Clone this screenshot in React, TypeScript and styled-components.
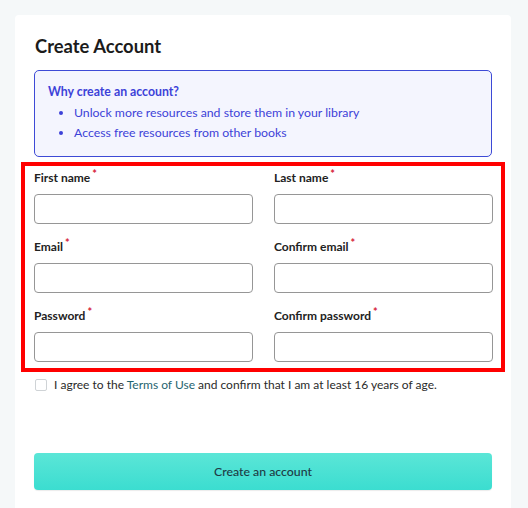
import * as React from "react"
import styled, { createGlobalStyle } from "styled-components"

const GlobalStyle = createGlobalStyle`
  html, body {
    margin: 0;
    padding: 0;
    background: #f5f8f9;
    font-family: "Lato", "Liberation Sans", sans-serif;
    color: #222;
  }
  * { box-sizing: border-box; }
`

const Page = styled.div`
  padding: 15px 17px 0 15px;
  height: 508px;
  overflow: hidden;
`

const Card = styled.div`
  background: #fff;
  border-radius: 4px;
  padding: 19px 19px 40px;
  min-height: 520px;
`

const Title = styled.h1`
  margin: 0 0 12px 1px;
  font-size: 18.4px;
  line-height: 24px;
  font-weight: 700;
  color: #1b1b1b;
`

const InfoBox = styled.div`
  border: 1px solid #3d4ad6;
  border-radius: 5px;
  background: #f4f5fe;
  color: #3d42d8;
  padding: 12px 13px 13px;
  font-size: 12.3px;
`

const InfoTitle = styled.div`
  font-weight: 700;
  line-height: 18px;
  margin-bottom: 2px;
`

const InfoList = styled.ul`
  margin: 0;
  padding: 0 0 0 26px;
  li {
    line-height: 20px;
  }
`

const Fields = styled.div`
  margin: 5px -13px 0;
  border: 4px solid #ff0000;
  padding: 3px 9px 6px;
  display: grid;
  grid-template-columns: 1fr 1fr;
  column-gap: 21px;
  row-gap: 14px;
`

const Field = styled.label`
  display: flex;
  flex-direction: column;
`

const Label = styled.span`
  font-size: 12px;
  font-weight: 700;
  line-height: 18px;
  color: #222;
  margin-bottom: 7px;
  sup {
    color: #d6213a;
    font-size: 11px;
    margin-left: 2px;
    vertical-align: 4px;
    line-height: 0;
  }
`

const Input = styled.input`
  height: 30px;
  border: 1px solid #969696;
  border-radius: 4px;
  background: #fff;
  padding: 0 8px;
  font: inherit;
`

const Agree = styled.label`
  display: flex;
  align-items: center;
  gap: 7px;
  margin-top: 4px;
  font-size: 12px;
  line-height: 18px;
  color: #2a2a2a;
  a {
    color: #1f6470;
    text-decoration: none;
  }
`

const Box = styled.span`
  width: 12px;
  height: 12px;
  flex: none;
  border: 1px solid #cfd3d6;
  border-radius: 2px;
  background: #fff;
  margin-left: 1px;
`

const Submit = styled.button`
  display: block;
  width: 100%;
  height: 37px;
  margin-top: 59px;
  border: none;
  border-radius: 4px;
  background: linear-gradient(#5be6d7, #3bddd0);
  color: #1e3a44;
  font-family: inherit;
  font-size: 12.3px;
  font-weight: 500;
  box-shadow: 0 1px 1px rgba(0, 0, 0, 0.08);
`

const fields = [
  "First name",
  "Last name",
  "Email",
  "Confirm email",
  "Password",
  "Confirm password",
]

export default function App() {
  return (
    <Page>
      <GlobalStyle />
      <Card>
        <Title>Create Account</Title>
        <InfoBox>
          <InfoTitle>Why create an account?</InfoTitle>
          <InfoList>
            <li>Unlock more resources and store them in your library</li>
            <li>Access free resources from other books</li>
          </InfoList>
        </InfoBox>
        <Fields>
          {fields.map((f) => (
            <Field key={f}>
              <Label>
                {f}
                <sup>*</sup>
              </Label>
              <Input type={f.toLowerCase().includes("password") ? "password" : "text"} />
            </Field>
          ))}
        </Fields>
        <Agree>
          <Box />
          <span>
            I agree to the <a href="#">Terms of Use</a> and confirm that I am at least 16 years of age.
          </span>
        </Agree>
        <Submit>Create an account</Submit>
      </Card>
    </Page>
  )
}
